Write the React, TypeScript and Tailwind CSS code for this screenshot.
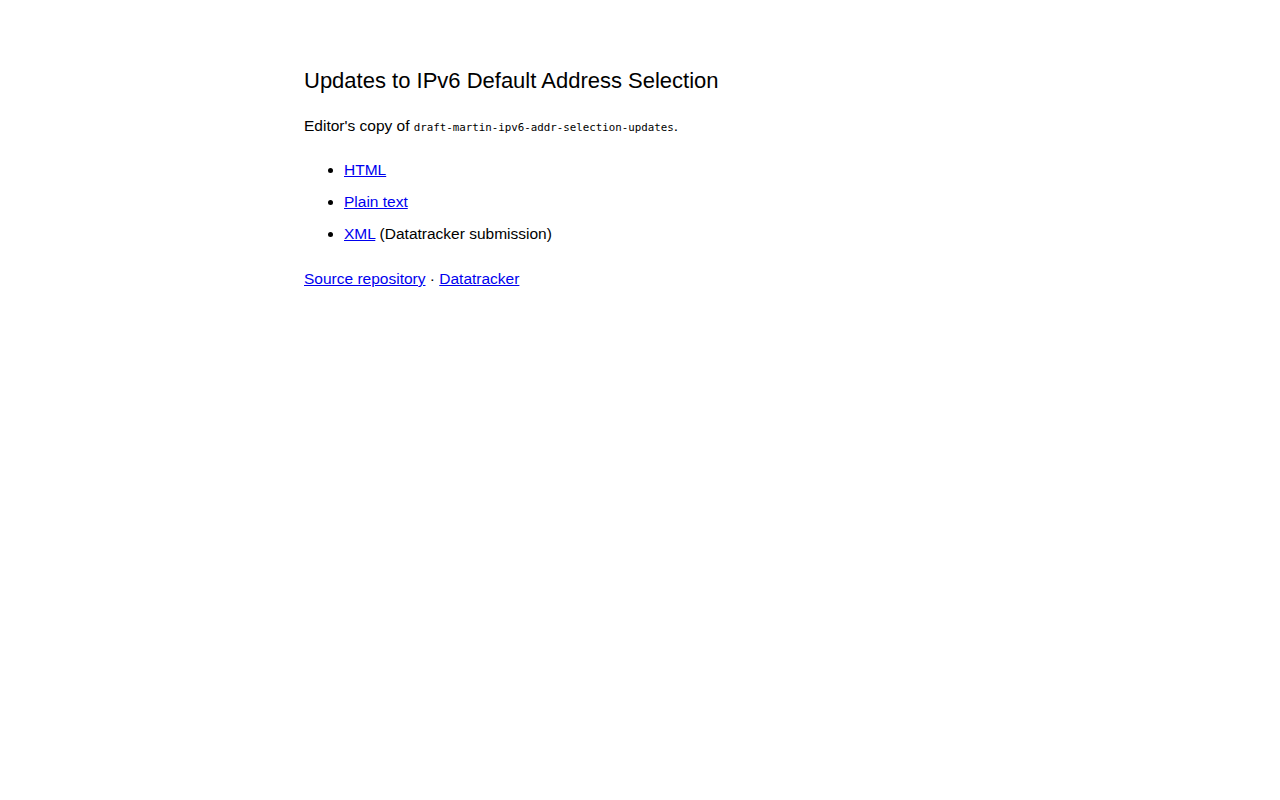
export default function App() {
  return (
    <div className="min-h-screen bg-white text-black">
      <main className="mx-auto max-w-2xl pt-[65px] font-['Liberation_Sans',Arial,sans-serif] text-[15.5px] leading-[24px]">
        <h1 className="text-[22px] leading-[32px] font-normal">Updates to IPv6 Default Address Selection</h1>
        <p className="mt-[17px]">
          Editor's copy of{' '}
          <code className="font-['DejaVu_Sans_Mono',monospace] text-[10.8px]">draft-martin-ipv6-addr-selection-updates</code>.
        </p>
        <ul className="mt-[18px] list-disc pl-[40px] space-y-[8px]">
          <li>
            <a href="#" className="text-[#0000ee] underline">HTML</a>
          </li>
          <li>
            <a href="#" className="text-[#0000ee] underline">Plain text</a>
          </li>
          <li>
            <a href="#" className="text-[#0000ee] underline">XML</a> (Datatracker submission)
          </li>
        </ul>
        <p className="mt-[21px]">
          <a href="#" className="text-[#0000ee] underline">Source repository</a> ·{' '}
          <a href="#" className="text-[#0000ee] underline">Datatracker</a>
        </p>
      </main>
    </div>
  )
}
